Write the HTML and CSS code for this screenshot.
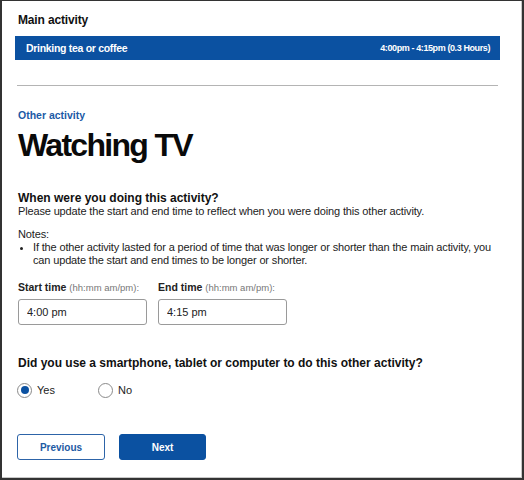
FILE: index.html
```html
<!DOCTYPE html>
<html lang="en">
<head>
<meta charset="utf-8">
<title>Other activity</title>
<link rel="stylesheet" href="styles.css">
</head>
<body>
<div class="frame">
  <h2 class="section-title">Main activity</h2>
  <div class="main-bar">
    <span class="bar-name">Drinking tea or coffee</span>
    <span class="bar-time">4:00pm - 4:15pm (0.3 Hours)</span>
  </div>
  <hr class="divider">
  <div class="content">
    <p class="eyebrow">Other activity</p>
    <h1 class="title">Watching TV</h1>
    <h3 class="question">When were you doing this activity?</h3>
    <p class="body">Please update the start and end time to reflect when you were doing this other activity.</p>
    <p class="body notes">Notes:</p>
    <ul class="note-list">
      <li>If the other activity lasted for a period of time that was longer or shorter than the main activity, you can update the start and end times to be longer or shorter.</li>
    </ul>
    <div class="time-fields">
      <div class="field">
        <label class="field-label"><span class="label-strong">Start time</span> <span class="hint">(hh:mm am/pm):</span></label>
        <input class="time-input" type="text" value="4:00 pm">
      </div>
      <div class="field">
        <label class="field-label"><span class="label-strong">End time</span> <span class="hint">(hh:mm am/pm):</span></label>
        <input class="time-input" type="text" value="4:15 pm">
      </div>
    </div>
    <h3 class="question q2">Did you use a smartphone, tablet or computer to do this other activity?</h3>
    <div class="radios">
      <label class="radio-option"><input class="radio" type="radio" name="device" checked><span class="radio-text">Yes</span></label>
      <label class="radio-option"><input class="radio" type="radio" name="device"><span class="radio-text">No</span></label>
    </div>
    <div class="actions">
      <button class="btn btn-secondary" type="button">Previous</button>
      <button class="btn btn-primary" type="button">Next</button>
    </div>
  </div>
</div>
</body>
</html>
```

FILE: styles.css
```css
* { box-sizing: border-box; }

html, body {
  margin: 0;
  padding: 0;
  background: #ffffff;
}

body {
  font-family: "Liberation Sans", Arial, sans-serif;
  color: #111111;
}

.frame {
  width: 524px;
  height: 480px;
  border: 2px solid #333333;
  border-top-width: 1px;
  padding: 12px 22px 0 13px;
  background: #ffffff;
  box-shadow: inset -1px -1px 0 #c8c8c8;
}

.section-title {
  margin: 0;
  padding-left: 3px;
  font-size: 12px;
  line-height: 14px;
  font-weight: bold;
  letter-spacing: -0.15px;
  color: #111111;
}

.main-bar {
  margin-top: 9px;
  height: 24px;
  background: #0b51a1;
  color: #ffffff;
  display: flex;
  align-items: center;
  justify-content: space-between;
  padding: 0 10px 0 11px;
  font-weight: bold;
}

.bar-name {
  font-size: 10.5px;
  letter-spacing: -0.3px;
}

.bar-time {
  font-size: 9px;
  letter-spacing: -0.4px;
}

.divider {
  margin: 25px 2px 0 2px;
  border: 0;
  height: 1px;
  background: #b4b4b4;
}

.content {
  padding-left: 3px;
}

.eyebrow {
  margin: 23px 0 0 0;
  font-size: 10.5px;
  line-height: 13px;
  font-weight: bold;
  color: #1b5aa6;
}

.title {
  margin: 5px 0 0 0;
  font-size: 32px;
  line-height: 36px;
  font-weight: bold;
  letter-spacing: -1.7px;
  color: #0a0a0a;
}

.question {
  margin: 28px 0 0 0;
  font-size: 12px;
  line-height: 14px;
  font-weight: bold;
  color: #111111;
}

.body {
  margin: 0;
  font-size: 11px;
  line-height: 13px;
  letter-spacing: -0.15px;
  color: #222222;
}

.notes {
  margin-top: 10px;
}

.note-list {
  margin: 0;
  padding-left: 15px;
  font-size: 11px;
  line-height: 13px;
  letter-spacing: -0.15px;
  color: #222222;
}

.time-fields {
  margin-top: 14px;
  display: flex;
  gap: 11px;
}

.field {
  width: 129px;
  display: flex;
  flex-direction: column;
  gap: 5px;
}

.field-label {
  font-size: 10.5px;
  line-height: 13px;
  white-space: nowrap;
}

.label-strong {
  font-weight: bold;
  color: #222222;
}

.hint {
  font-size: 9.5px;
  color: #777777;
}

.time-input {
  width: 129px;
  height: 26px;
  margin: 0;
  padding: 0 8px;
  border: 1px solid #9a9a9a;
  border-radius: 3px;
  font-family: "Liberation Sans", Arial, sans-serif;
  font-size: 11px;
  color: #222222;
  background: #ffffff;
}

.q2 {
  margin-top: 31px;
}

.radios {
  margin-top: 12px;
  margin-left: -1px;
  display: flex;
  height: 16px;
  align-items: center;
}

.radio-option {
  display: flex;
  align-items: center;
  gap: 5px;
  min-width: 81px;
  font-size: 11px;
  color: #222222;
}

.radio {
  appearance: none;
  -webkit-appearance: none;
  width: 15px;
  height: 15px;
  margin: 0;
  border: 1px solid #8a8a8a;
  border-radius: 50%;
  background: #ffffff;
  display: grid;
  place-items: center;
}

.radio:checked::before {
  content: "";
  width: 8px;
  height: 8px;
  border-radius: 50%;
  background: #0b51a1;
}

.actions {
  margin-top: 36px;
  margin-left: -1px;
  display: flex;
  gap: 14px;
}

.btn {
  height: 26px;
  border-radius: 3px;
  font-family: "Liberation Sans", Arial, sans-serif;
  font-size: 10px;
  font-weight: bold;
  cursor: pointer;
  padding: 0;
}

.btn-secondary {
  width: 88px;
  background: #ffffff;
  color: #1d5aa3;
  border: 1px solid #2d64a8;
}

.btn-primary {
  width: 87px;
  background: #0b51a1;
  color: #ffffff;
  border: 1px solid #0b51a1;
}
```
